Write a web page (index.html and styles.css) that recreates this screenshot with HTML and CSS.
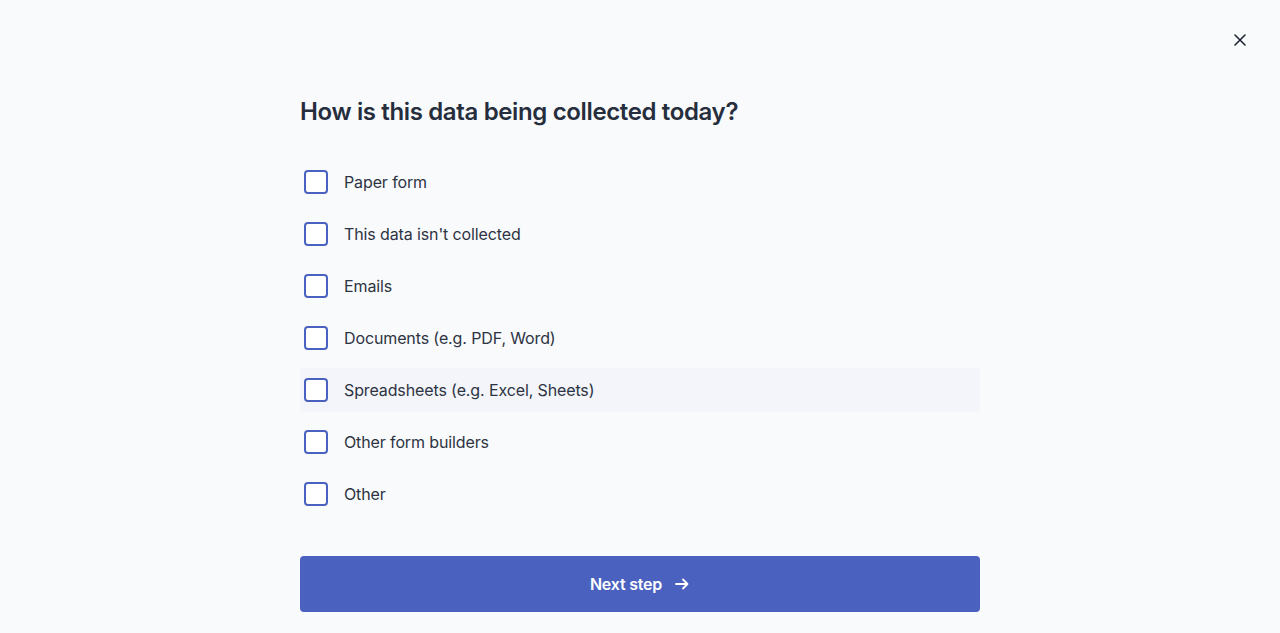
FILE: index.html
```html
<!DOCTYPE html>
<html lang="en">
<head>
    <meta charset="UTF-8">
    <meta name="viewport" content="width=device-width, initial-scale=1.0">
    <title>Onboarding - Data collection</title>
    <link rel="stylesheet" href="styles.css">
</head>
<body>
    <button class="close-btn" aria-label="Close">
        <svg width="16" height="16" viewBox="0 0 16 16" fill="none" stroke="currentColor" stroke-width="1.6" stroke-linecap="round">
            <path d="M3 3L13 13M13 3L3 13"/>
        </svg>
    </button>

    <div class="container">
        <h1>How is this data being collected today?</h1>

        <div class="options">
            <label class="option"><span class="box"></span>Paper form</label>
            <label class="option"><span class="box"></span>This data isn't collected</label>
            <label class="option"><span class="box"></span>Emails</label>
            <label class="option"><span class="box"></span>Documents (e.g. PDF, Word)</label>
            <label class="option hover"><span class="box"></span>Spreadsheets (e.g. Excel, Sheets)</label>
            <label class="option"><span class="box"></span>Other form builders</label>
            <label class="option"><span class="box"></span>Other</label>
        </div>

        <button class="next-btn">
            Next step
            <svg width="16" height="16" viewBox="0 0 16 16" fill="none" stroke="currentColor" stroke-width="1.8" stroke-linecap="round" stroke-linejoin="round">
                <path d="M2 8H13.5M9 3.5L13.5 8L9 12.5"/>
            </svg>
        </button>
    </div>
</body>
</html>
```

FILE: styles.css
```css
body {
    font-family: 'Inter', 'Liberation Sans', sans-serif;
    background-color: #f8fafc;
    margin: 0;
    padding: 0;
    color: #2d3342;
}
.close-btn {
    position: absolute;
    top: 32px;
    right: 32px;
    width: 16px;
    height: 16px;
    padding: 0;
    border: none;
    background: none;
    color: #1f2633;
    cursor: pointer;
}
.container {
    width: 680px;
    margin: 0 auto;
    padding-top: 96px;
}
h1 {
    margin: 0 0 32px;
    font-size: 24px;
    line-height: 32px;
    font-weight: 600;
    color: #262d3d;
    letter-spacing: -0.36px;
}
.options {
    display: flex;
    flex-direction: column;
    gap: 8px;
}
.option {
    display: flex;
    align-items: center;
    height: 44px;
    padding: 0 4px;
    font-size: 16px;
    color: #2d3342;
    letter-spacing: -0.12px;
    border-radius: 2px;
    cursor: pointer;
}
.option.hover {
    background-color: #f3f5fa;
}
.box {
    width: 24px;
    height: 24px;
    box-sizing: border-box;
    border: 2px solid #4a61c0;
    border-radius: 4px;
    background: #fff;
    margin-right: 16px;
}
.next-btn {
    display: flex;
    align-items: center;
    justify-content: center;
    gap: 12px;
    width: 100%;
    height: 56px;
    margin-top: 40px;
    border: none;
    border-radius: 4px;
    background-color: #4a61c0;
    color: #fff;
    font-family: inherit;
    font-size: 16px;
    font-weight: 600;
    letter-spacing: -0.2px;
    cursor: pointer;
}
```
